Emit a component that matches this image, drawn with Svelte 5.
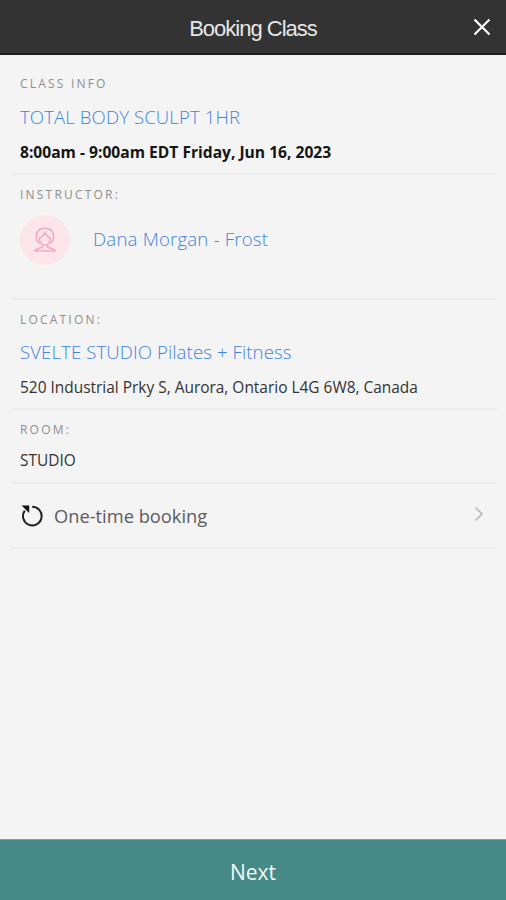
<script lang="ts">
  const booking = {
    name: "TOTAL BODY SCULPT 1HR",
    time: "8:00am - 9:00am EDT Friday, Jun 16, 2023",
    instructor: "Dana Morgan - Frost",
    studio: "SVELTE STUDIO Pilates + Fitness",
    address: "520 Industrial Prky S, Aurora, Ontario L4G 6W8, Canada",
    room: "STUDIO",
  };
</script>

<div class="screen">
  <header>
    <h1>Booking Class</h1>
    <button class="close" aria-label="Close">
      <svg width="18" height="18" viewBox="0 0 18 18">
        <path d="M1.5 1.5 L16.5 16.5 M16.5 1.5 L1.5 16.5" />
      </svg>
    </button>
  </header>

  <main>
    <section class="info">
      <h2>CLASS INFO</h2>
      <a class="name" href="#class">{booking.name}</a>
      <p class="time">{booking.time}</p>
    </section>

    <section class="instructor">
      <h2>INSTRUCTOR:</h2>
      <div class="person">
        <span class="avatar">
          <svg width="24" height="28" viewBox="0 0 24 28">
            <path
              d="M7 17.5 C4.5 16.5 3.2 14 3.3 10.5 C3.4 5 7 2.2 12 2.2 C17 2.2 20.6 5 20.7 10.5 C20.8 14 19.5 16.5 17 17.5"
            />
            <path
              d="M6.3 12.3 C8.8 11.5 10.8 9.8 11.9 6.8 C13.3 9.5 15.2 11.5 17.7 12.3 C17.6 16.3 15 19 12 19 C9 19 6.4 16.3 6.3 12.3 Z"
            />
            <path d="M9.5 18.5 V21 C6 22.6 3.5 22.5 1.5 25 M14.5 18.5 V21 C18 22.6 20.5 22.5 22.5 25 M1.5 25 H22.5" />
          </svg>
        </span>
        <a class="who" href="#instructor">{booking.instructor}</a>
      </div>
    </section>

    <section class="location">
      <h2>LOCATION:</h2>
      <a class="studio" href="#studio">{booking.studio}</a>
      <p class="address">{booking.address}</p>
    </section>

    <section class="room">
      <h2>ROOM:</h2>
      <p class="room-name">{booking.room}</p>
    </section>

    <button class="repeat">
      <svg class="loop" width="24" height="24" viewBox="0 0 24 24">
        <path class="ring" d="M12.2 2.8 A9.3 9.3 0 1 1 4.8 6.6" />
        <path class="head" d="M1.6 1.6 H9.2 V9 Z" />
      </svg>
      <span>One-time booking</span>
      <svg class="chevron" width="10" height="16" viewBox="0 0 10 16">
        <path d="M1.5 1.5 L8 8 L1.5 14.5" />
      </svg>
    </button>
  </main>

  <button class="next"><span>Next</span></button>
</div>

<style>
  :global(body) {
    margin: 0;
    background: #f4f4f4;
  }
  .screen {
    display: flex;
    flex-direction: column;
    height: 900px;
    background: #f4f4f4;
    font-family: "Open Sans", sans-serif;
    color: #333;
  }
  button {
    padding: 0;
    border: none;
    background: none;
    font-family: inherit;
    color: inherit;
  }
  svg {
    display: block;
    flex: none;
    fill: none;
  }
  h1,
  h2,
  p {
    margin: 0;
    white-space: nowrap;
  }
  a {
    display: block;
    font-size: 18.6px;
    font-weight: 300;
    line-height: 24px;
    letter-spacing: 0.1px;
    color: #3f82e2;
    text-decoration: none;
    white-space: nowrap;
  }
  header {
    display: grid;
    grid-template-columns: 1fr auto 1fr;
    align-items: center;
    box-sizing: border-box;
    height: 55px;
    padding-right: 15px;
    background: #333;
    border-bottom: 2px solid #1c1c1c;
  }
  h1 {
    grid-column: 2;
    padding: 4px 0 0 15px;
    font: 400 22px/26px "Liberation Sans", Arial, sans-serif;
    letter-spacing: -1px;
    color: #e6e6e6;
  }
  .close {
    justify-self: end;
  }
  .close path {
    stroke: #fff;
    stroke-width: 2.2;
  }
  main {
    flex: 1;
    padding: 9px 9px 0 11px;
  }
  section {
    box-sizing: border-box;
    padding: 12px 9px 0;
    border-bottom: 2px solid #ebeeee;
  }
  h2 {
    font-size: 12px;
    font-weight: 400;
    line-height: 16px;
    letter-spacing: 2.2px;
    color: #8f8f8f;
  }
  .info {
    height: 111px;
  }
  .info h2 {
    font-weight: 500;
  }
  .name {
    margin-top: 13px;
  }
  .studio {
    margin-top: 12px;
  }
  .time {
    margin-top: 12px;
    font-size: 15.6px;
    font-weight: 700;
    line-height: 22px;
    color: #151515;
  }
  .instructor {
    height: 125px;
  }
  .person {
    display: flex;
    align-items: center;
    gap: 23px;
    margin-top: 12px;
  }
  .avatar {
    display: flex;
    align-items: center;
    justify-content: center;
    width: 50px;
    height: 50px;
    border-radius: 50%;
    background: #fce6ec;
  }
  .avatar path {
    stroke: #f4a9bf;
    stroke-width: 1.5;
  }
  .who {
    margin-bottom: 2px;
    letter-spacing: 0.2px;
  }
  .location {
    height: 110px;
  }
  .address,
  .room-name {
    font-size: 15.45px;
    line-height: 22px;
  }
  .address {
    margin-top: 12px;
  }
  .room {
    height: 74px;
  }
  .room-name {
    margin-top: 11px;
  }
  .repeat {
    display: flex;
    align-items: center;
    box-sizing: border-box;
    width: 100%;
    height: 65px;
    padding: 0 13px 0 9px;
    border-bottom: 2px solid #ebeeee;
    font-size: 18.3px;
    color: #5c5c5c;
  }
  .repeat span {
    flex: 1;
    margin-left: 10px;
    text-align: left;
  }
  .ring {
    stroke: #222;
    stroke-width: 2;
  }
  .head {
    fill: #111;
  }
  .chevron {
    margin-bottom: 3px;
  }
  .chevron path {
    stroke: #b4b4b4;
    stroke-width: 1.5;
  }
  .next {
    height: 61px;
    padding-top: 3px;
    border-top: 1px solid #76a5a1;
    background: #468a87;
    font-size: 21px;
    color: #f4fafa;
  }
</style>
